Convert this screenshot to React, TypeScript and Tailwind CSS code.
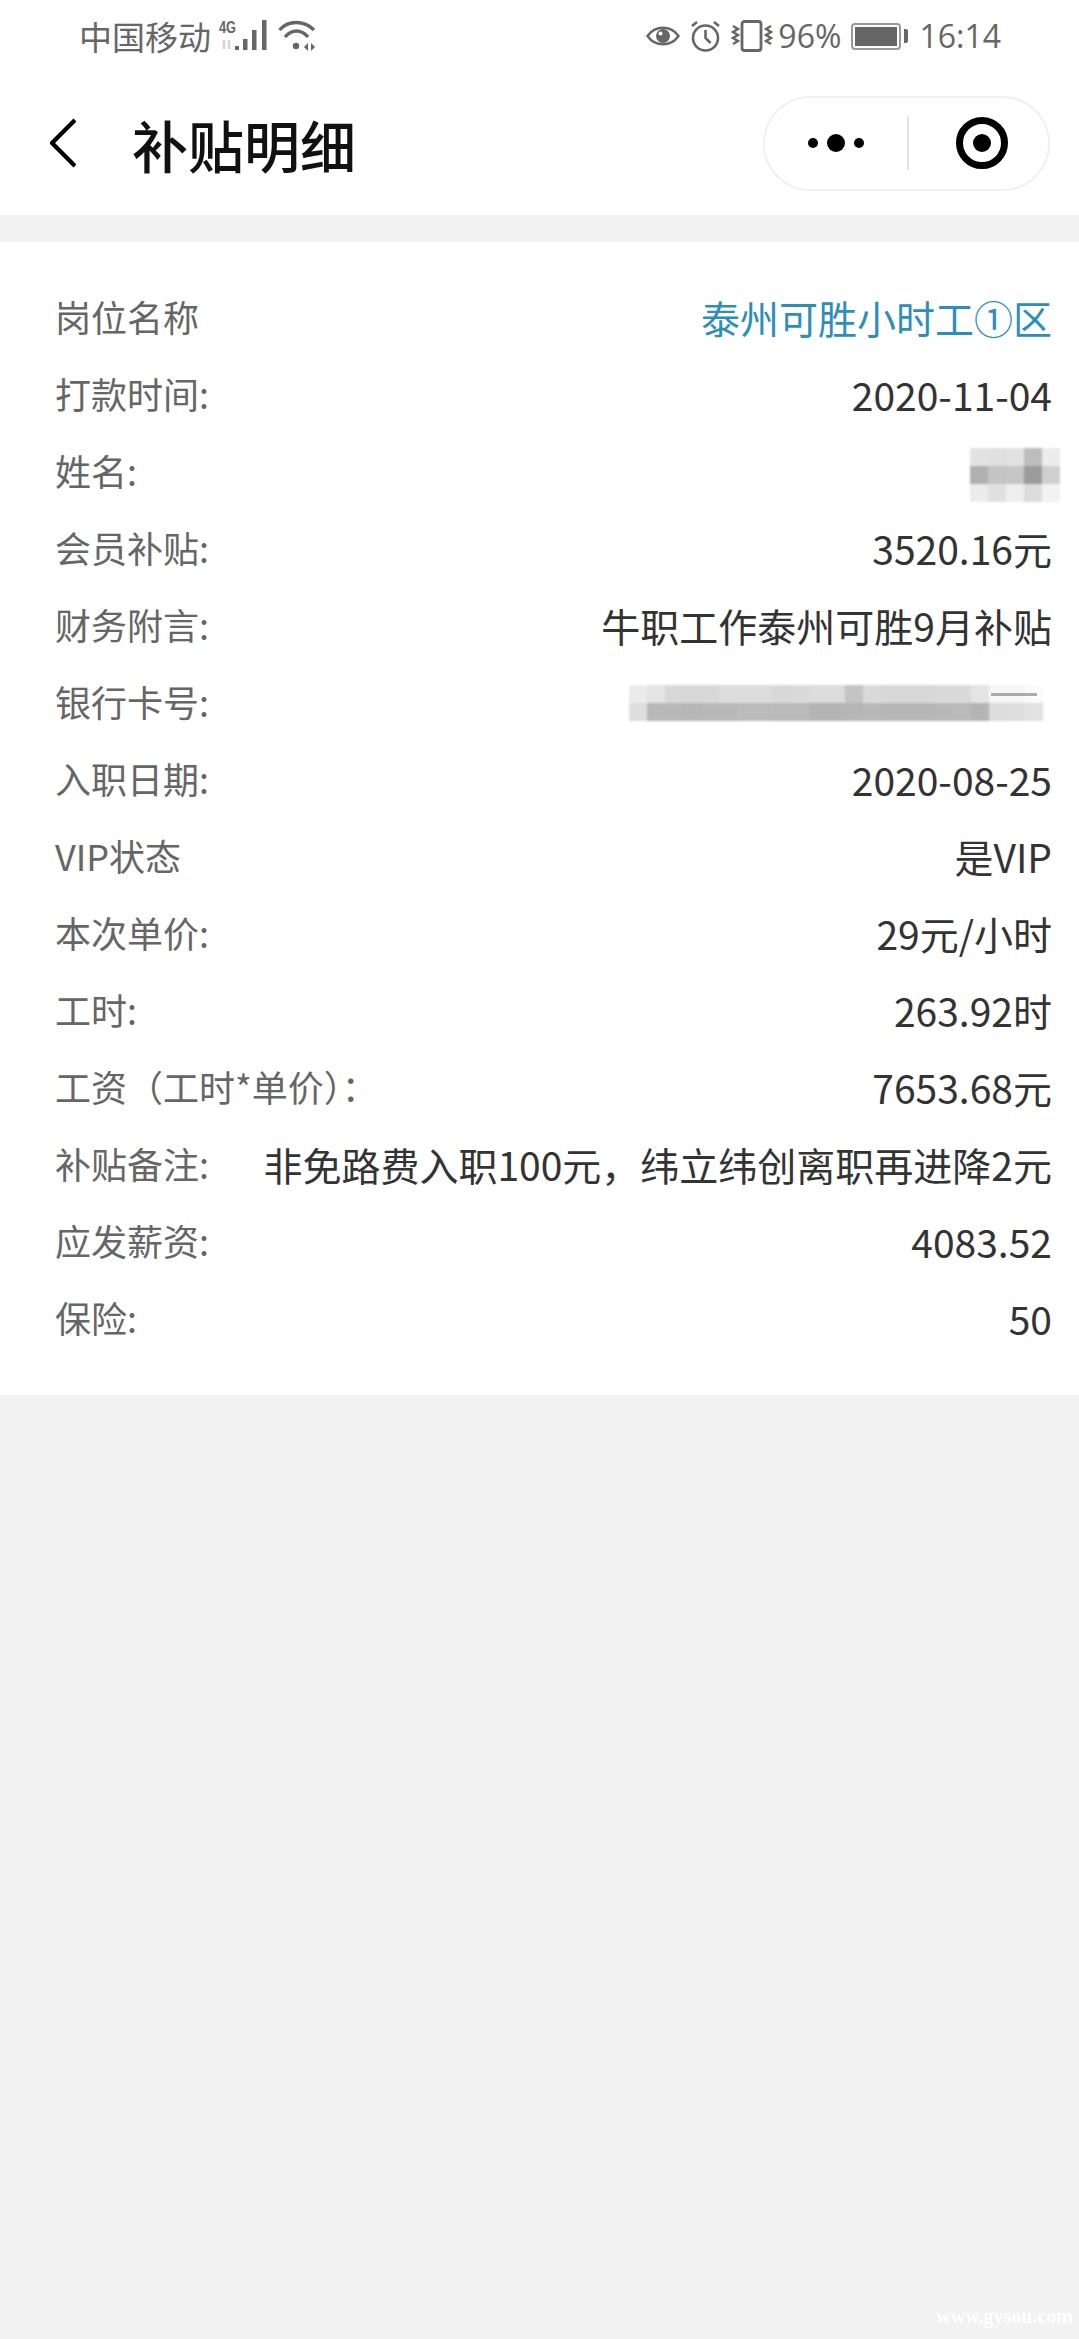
const rows = [
  { label: '岗位名称', value: '泰州可胜小时工①区', link: true },
  { label: '打款时间:', value: '2020-11-04' },
  { label: '姓名:', blur: 'name' },
  { label: '会员补贴:', value: '3520.16元' },
  { label: '财务附言:', value: '牛职工作泰州可胜9月补贴' },
  { label: '银行卡号:', blur: 'card' },
  { label: '入职日期:', value: '2020-08-25' },
  { label: 'VIP状态', value: '是VIP' },
  { label: '本次单价:', value: '29元/小时' },
  { label: '工时:', value: '263.92时' },
  { label: '工资\uFF08工时*单价\uFF09\uFF1A', value: '7653.68元' },
  { label: '补贴备注:', value: '非免路费入职100元\uFF0C纬立纬创离职再进降2元' },
  { label: '应发薪资:', value: '4083.52' },
  { label: '保险:', value: '50' },
];

const nameCells = [
  ['#e2e2e2', '#e0e0e0', '#e2e2e2', '#bdbdbd', '#ececec'],
  ['#b0b0b0', '#c4c4c4', '#c6c6c6', '#9c9c9c', '#cfcfcf'],
  ['#ececec', '#e0e0e0', '#eeeeee', '#dcdcdc', '#f2f2f2'],
];

const cardTop = ['#ececec', '#e4e4e4', '#d8d8d8', '#d8d8d8', '#d8d8d8', '#dcdcdc', '#dcdcdc', '#dcdcdc', '#d8d8d8', '#dadada', '#dcdcdc', '#dcdcdc', '#c4c4c4', '#dadada', '#d8d8d8', '#d8d8d8', '#d8d8d8', '#dadada', '#dadada', '#e4e4e4', '#f6f6f6', '#f6f6f6', '#fbfbfb'];
const cardBottom = ['#dedede', '#b8b8b8', '#b8b8b8', '#b6b6b6', '#b8b8b8', '#b8b8b8', '#bcbcbc', '#bcbcbc', '#bababa', '#bababa', '#b4b4b4', '#b4b4b4', '#b6b6b6', '#b8b8b8', '#b6b6b6', '#b6b6b6', '#b6b6b6', '#b8b8b8', '#bababa', '#b4b4b4', '#dcdcdc', '#dedede', '#e2e2e2'];

function Mosaic({ lines }: { lines: string[][] }) {
  return (
    <div className="flex flex-col blur-[1px]">
      {lines.map((line, i) => (
        <div key={i} className="flex">
          {line.map((color, j) => (
            <div key={j} className="w-[18px] h-[18px]" style={{ backgroundColor: color }} />
          ))}
        </div>
      ))}
    </div>
  );
}

function StatusBar() {
  return (
    <div className="flex items-center h-[72px] pl-[79px] pr-[78px] text-[#666]">
      <span className="text-[33px] leading-none">中国移动</span>
      {/* signal */}
      <svg className="ml-[8px]" width="50" height="34" viewBox="0 0 50 34">
        <text x="0" y="14" fontSize="16" fontWeight="700" fill="#666" fontFamily="Liberation Sans, sans-serif" textLength="17" lengthAdjust="spacingAndGlyphs">4G</text>
        <path d="M5 21v9M10 21v9" stroke="#d4d4d4" strokeWidth="2.5" fill="none" />
        <rect x="16" y="27" width="4" height="4" fill="#666" />
        <rect x="24" y="20" width="4.5" height="11" fill="#666" />
        <rect x="33" y="11" width="4.5" height="20" fill="#666" />
        <rect x="43" y="1" width="4.5" height="30" fill="#666" />
      </svg>
      {/* wifi */}
      <svg className="ml-[9px]" width="38" height="34" viewBox="0 0 38 34" fill="none" stroke="#666" strokeWidth="3.4">
        <path d="M1.5 11C10 1 26 1 36 11" />
        <path d="M7 18C14 10 23 10 30 18" />
        <circle cx="18" cy="27" r="3.2" fill="#666" stroke="none" />
        <path d="M26 28l4-4v8ZM37 28l-4-4v8Z" fill="#666" stroke="none" />
      </svg>
      <div className="ml-auto flex items-center">
        {/* eye */}
        <svg width="34" height="26" viewBox="0 0 34 26" fill="none" stroke="#666" strokeWidth="2.4">
          <path d="M1.5 13C9 2 25 2 32.5 13C25 24 9 24 1.5 13Z" />
          <circle cx="17" cy="13" r="7" fill="#666" stroke="none" />
          <circle cx="14.5" cy="10.5" r="2" fill="#fff" stroke="none" />
        </svg>
        {/* alarm */}
        <svg className="ml-[10px]" width="31" height="32" viewBox="0 0 31 32" fill="none" stroke="#666" strokeWidth="2.6">
          <circle cx="15.5" cy="18" r="12.5" />
          <path d="M15.5 10v8l5 5" />
          <path d="M2 6l5-4M29 6l-5-4" />
        </svg>
        {/* vibrate */}
        <svg className="ml-[10px]" width="42" height="32" viewBox="0 0 42 32" fill="none" stroke="#666" strokeWidth="2.4">
          <rect x="11" y="1.5" width="19" height="29" rx="2.5" strokeWidth="2.8" />
          <path d="M2 6l5 3-5 3 5 3-5 3 5 3-5 3" />
          <path d="M40 6l-5 3 5 3-5 3 5 3-5 3 5 3" />
        </svg>
        <span className="ml-[5px] text-[32px] leading-none font-['Open_Sans',sans-serif]">96%</span>
        {/* battery */}
        <div className="ml-[10px] flex items-center gap-[3px]">
          <div className="w-[50px] h-[27px] rounded-[4px] border-2 border-[#999] p-[2px]">
            <div className="w-full h-full bg-[#666]" />
          </div>
          <div className="w-[4px] h-[14px] rounded-r-[2px] bg-[#666]" />
        </div>
        <span className="ml-[11px] text-[32px] leading-none font-['Open_Sans',sans-serif]">16:14</span>
      </div>
    </div>
  );
}

function NavBar() {
  return (
    <div className="flex items-center h-[143px] pb-[1px] pl-[50px] pr-[29px]">
      <svg width="26" height="50" viewBox="0 0 26 50" fill="none" stroke="#000" strokeWidth="4.4">
        <path d="M25 2L2 25l23 23" />
      </svg>
      <h1 className="ml-[56px] pt-[1px] text-[56px] leading-none font-medium text-[#111]">补贴明细</h1>
      <div className="ml-auto flex items-center w-[287px] h-[95px] rounded-full border-2 border-[#f0f0f0]">
        <div className="flex items-center justify-center gap-[9px] w-[142px]">
          <span className="w-[10px] h-[10px] rounded-full bg-black" />
          <span className="w-[18px] h-[18px] rounded-full bg-black" />
          <span className="w-[10px] h-[10px] rounded-full bg-black" />
        </div>
        <div className="w-[2px] h-[54px] bg-[#e4e4e4]" />
        <div className="ml-[47px] flex items-center justify-center w-[52px] h-[52px] rounded-full border-[7px] border-black">
          <span className="w-[18px] h-[18px] rounded-full bg-black" />
        </div>
      </div>
    </div>
  );
}

export default function App() {
  return (
    <div className="relative w-[1079px] h-[2339px] overflow-hidden bg-[#f2f2f2] font-['Noto_Sans_CJK_SC','Noto_Sans',sans-serif]">
      <div className="bg-white h-[215px]">
        <StatusBar />
        <NavBar />
      </div>

      <div className="mt-[27px] h-[1153px] bg-white pt-[37px] pl-[55px] pr-[27px]">
        {rows.map((row) => (
          <div key={row.label} className="flex items-center justify-between h-[77px]">
            <span className="pb-[3px] text-[36px] leading-none text-[#666] whitespace-nowrap">{row.label}</span>
            {row.blur === 'name' && (
              <div className="mt-[6px] mr-[-8px]">
                <Mosaic lines={nameCells} />
              </div>
            )}
            {row.blur === 'card' && (
              <div className="relative mr-[9px]">
                <Mosaic lines={[cardTop, cardBottom]} />
                <div className="absolute top-[8px] right-[6px] w-[46px] h-[3px] bg-[#8a8a8a] opacity-70" />
              </div>
            )}
            {row.value && (
              <span className={`text-[39px] leading-none whitespace-nowrap ${row.link ? 'text-[#2d8fb8]' : 'text-[#333]'}`}>
                {row.value}
              </span>
            )}
          </div>
        ))}
      </div>

      {/* watermark */}
      <span className="absolute right-[6px] bottom-[13px] text-[20px] leading-none font-bold text-white font-['Liberation_Serif',serif] blur-[0.5px]">
        www.gysou.com
      </span>
    </div>
  );
}
